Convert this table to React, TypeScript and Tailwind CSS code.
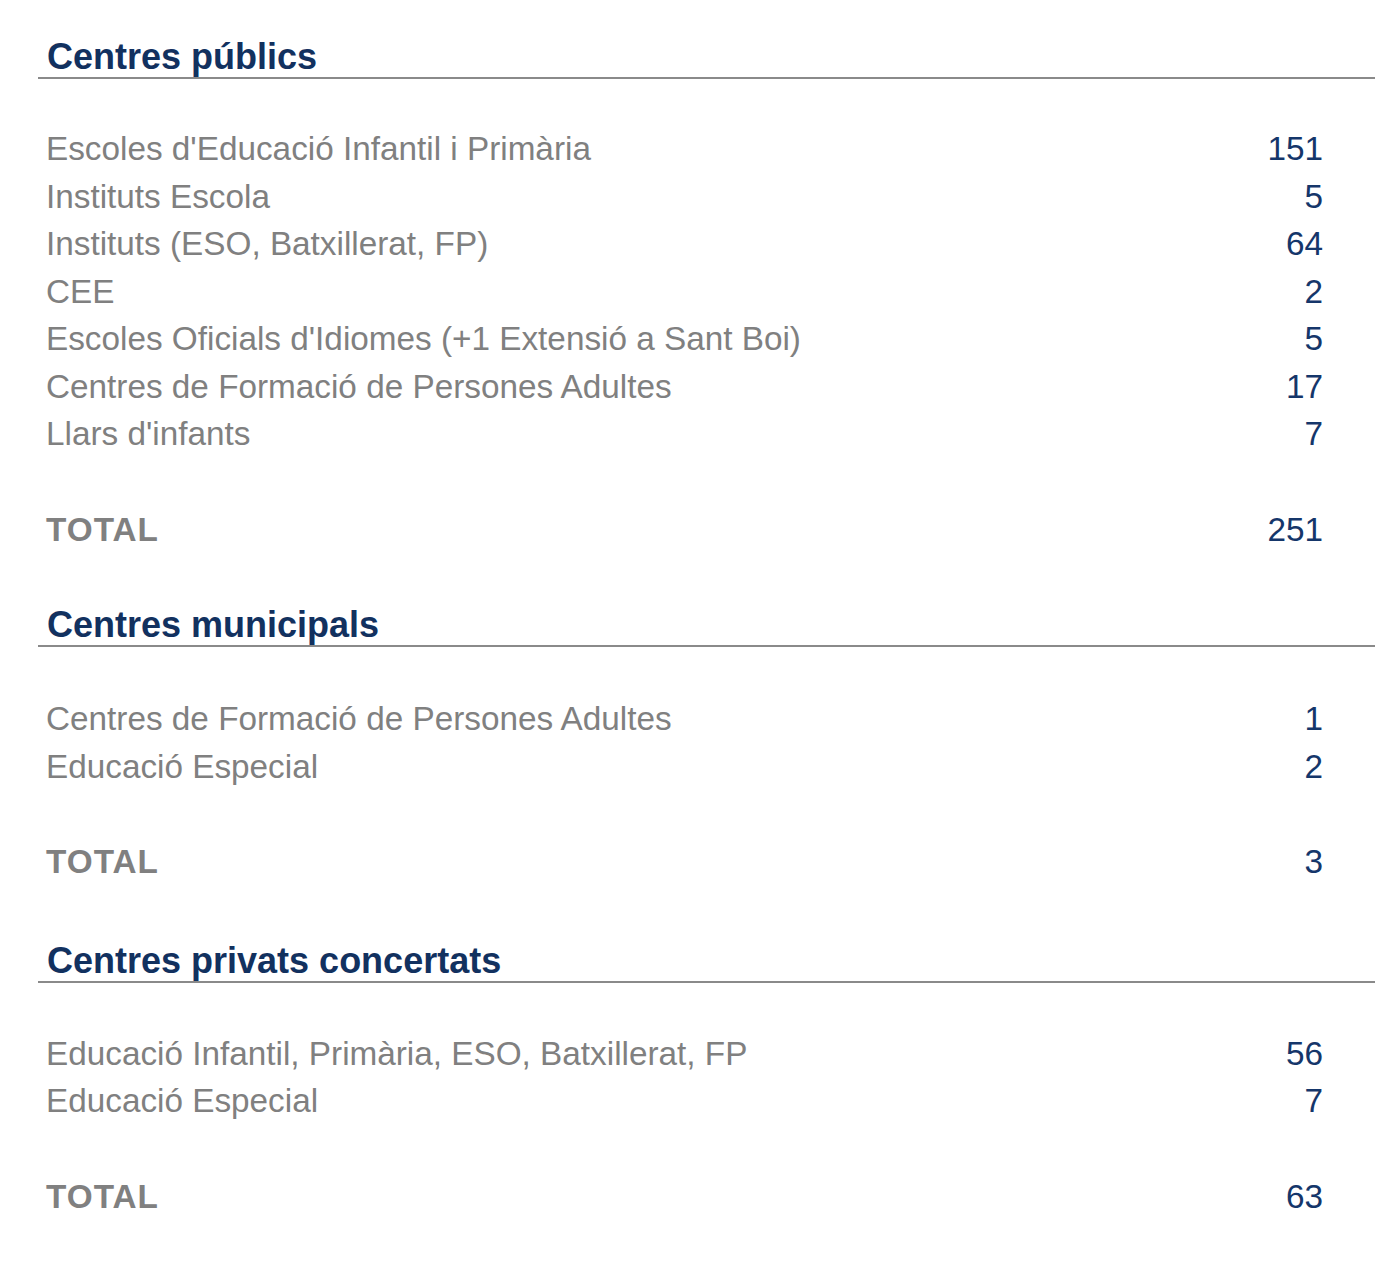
type Row = { label: string; value: string };

type Section = {
  title: string;
  rows: Row[];
  total: string;
  top: string;
  gap: string;
};

const sections: Section[] = [
  {
    title: "Centres públics",
    rows: [
      { label: "Escoles d'Educació Infantil i Primària", value: "151" },
      { label: "Instituts Escola", value: "5" },
      { label: "Instituts (ESO, Batxillerat, FP)", value: "64" },
      { label: "CEE", value: "2" },
      { label: "Escoles Oficials d'Idiomes (+1 Extensió a Sant Boi)", value: "5" },
      { label: "Centres de Formació de Persones Adultes", value: "17" },
      { label: "Llars d'infants", value: "7" },
    ],
    total: "251",
    top: "mt-[37px]",
    gap: "mt-[46px]",
  },
  {
    title: "Centres municipals",
    rows: [
      { label: "Centres de Formació de Persones Adultes", value: "1" },
      { label: "Educació Especial", value: "2" },
    ],
    total: "3",
    top: "mt-[52px]",
    gap: "mt-[48px]",
  },
  {
    title: "Centres privats concertats",
    rows: [
      { label: "Educació Infantil, Primària, ESO, Batxillerat, FP", value: "56" },
      { label: "Educació Especial", value: "7" },
    ],
    total: "63",
    top: "mt-[55px]",
    gap: "mt-[47px]",
  },
];

function SectionBlock({ section }: { section: Section }) {
  return (
    <section className={section.top}>
      <h2 className="h-[42px] border-b-2 border-[#8a8a8a] pl-[9px] text-[36px] leading-[40px] font-bold text-[#12315f]">
        {section.title}
      </h2>
      <div className={section.gap}>
        {section.rows.map((row) => (
          <div
            key={row.label}
            className="flex h-[47.5px] items-center justify-between pl-[8px] pr-[52px] text-[33.3px] leading-[47.5px]"
          >
            <span className="text-[#808080]">{row.label}</span>
            <span className="text-[#15366a]">{row.value}</span>
          </div>
        ))}
      </div>
      <div className="mt-[48px] flex h-[47.5px] items-center justify-between pl-[8px] pr-[52px] text-[33.3px] leading-[47.5px]">
        <span className="font-bold tracking-[1px] text-[#808080]">TOTAL</span>
        <span className="text-[#15366a]">{section.total}</span>
      </div>
    </section>
  );
}

export default function App() {
  return (
    <div className="min-h-screen bg-white font-['Liberation_Sans',Arial,sans-serif]">
      <div className="ml-[38px] w-[1337px]">
        {sections.map((s) => (
          <SectionBlock key={s.title} section={s} />
        ))}
      </div>
    </div>
  );
}
